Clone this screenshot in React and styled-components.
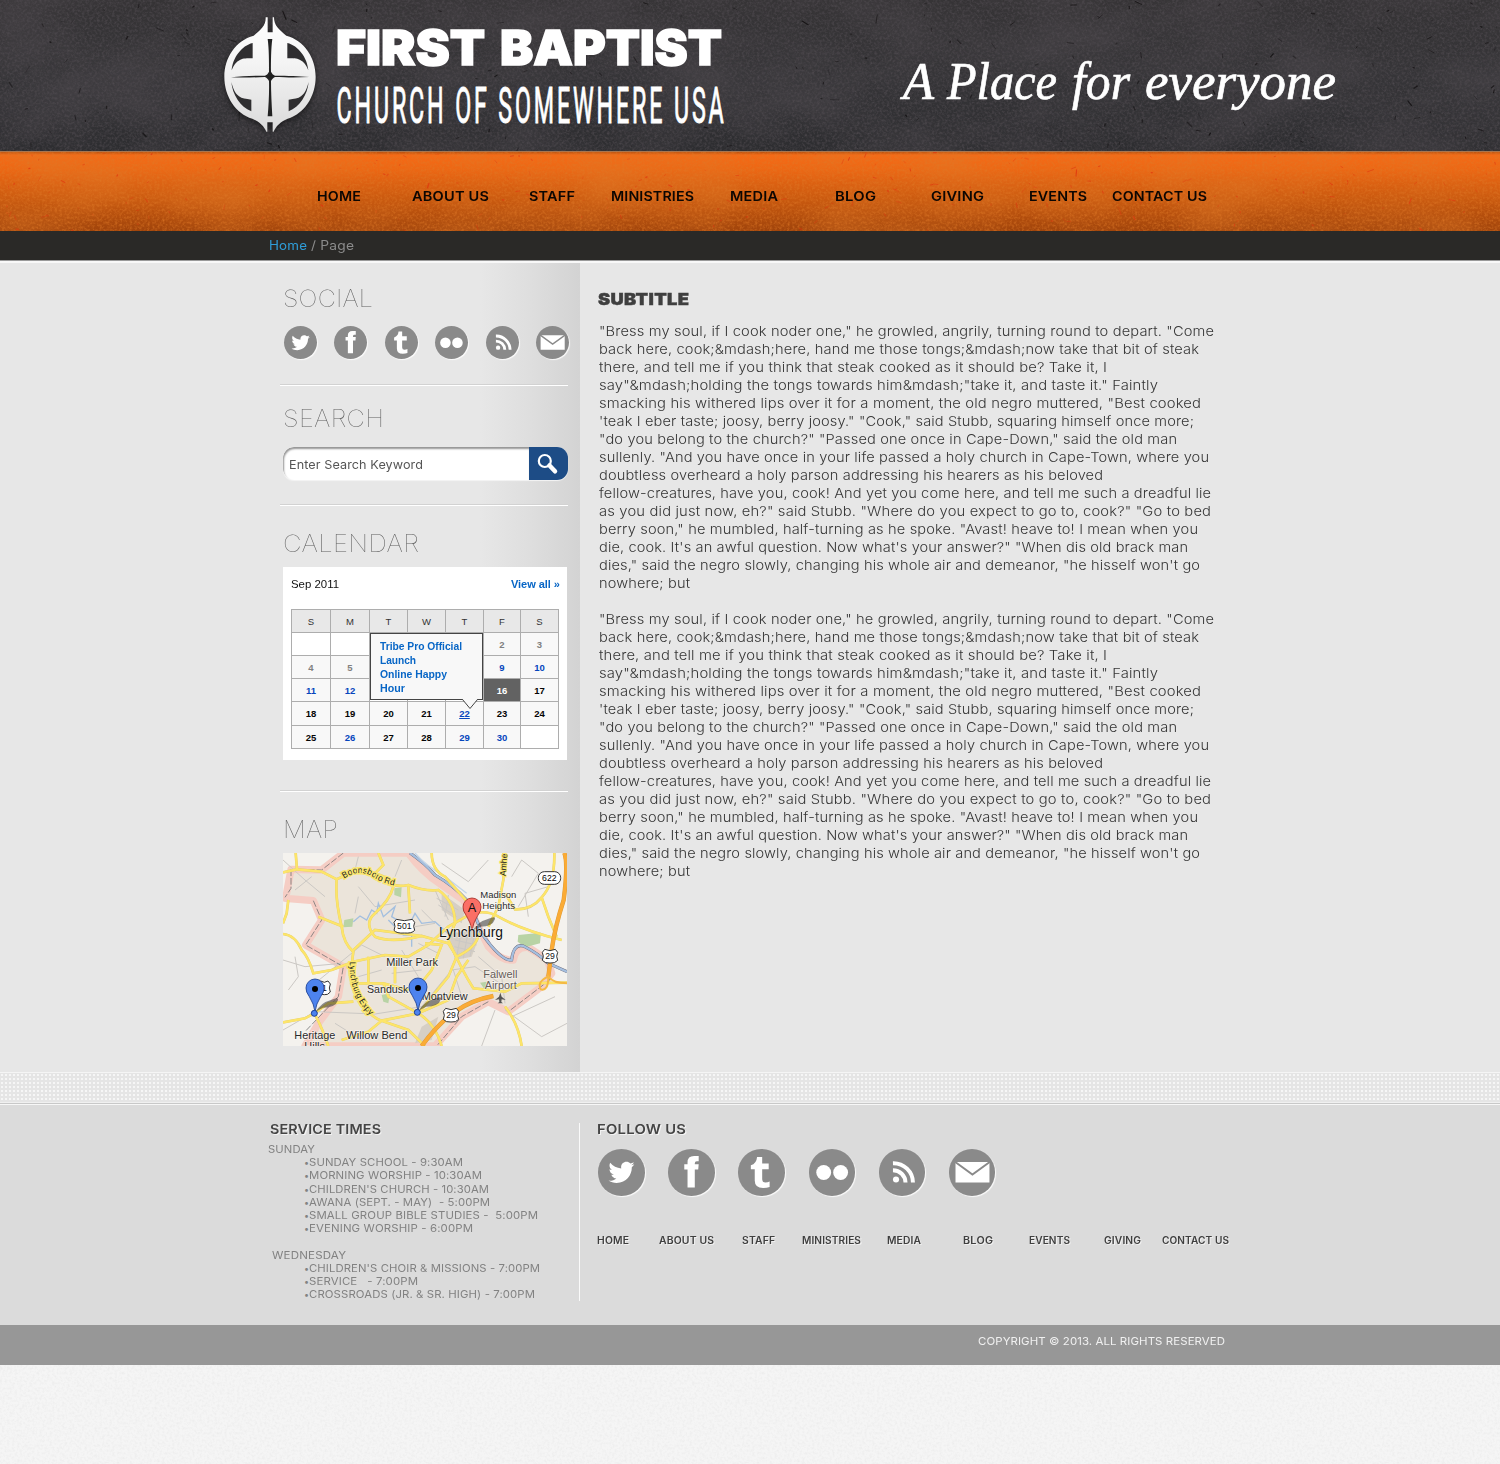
import React, { useLayoutEffect, useRef, useState } from "react";
import styled, { createGlobalStyle } from "styled-components";
import { FaTwitter } from "react-icons/fa";

const sans = `Inter, "Open Sans", sans-serif`;
const arial = `"Liberation Sans", Arial, sans-serif`;

const GlobalStyle = createGlobalStyle`
  * { box-sizing: border-box; }
  body { margin: 0; background: #f3f3f3; font-family: ${sans}; }
`;

/* ---------- fitted text: widens glyphs and tracking to a set measure ---------- */
const Measure = styled.span`
  display: block;
  flex: none;
  width: ${(p) => p.$w}px;
  margin-left: ${(p) => p.$ml || 0}px;
  white-space: pre;
`;

const Run = styled.span`
  display: block;
  width: max-content;
  transform-origin: 0 50%;
`;

function Tracked({ w, ml, children }) {
  const ref = useRef(null);
  const [fit, setFit] = useState({});
  useLayoutEffect(() => {
    const natural = ref.current.getBoundingClientRect().width;
    const scale = 1 + (w / natural - 1) * 0.8;
    const spacing = (w / scale - natural) / Math.max(1, children.length - 1);
    setFit({ letterSpacing: `${spacing}px`, transform: `scaleX(${scale})` });
  }, []);
  return (
    <Measure $w={w} $ml={ml}>
      <Run ref={ref} style={fit}>{children}</Run>
    </Measure>
  );
}

/* ---------- textures ---------- */
const TextureSvg = styled.svg`
  position: absolute;
  inset: 0;
  width: 100%;
  height: 100%;
  display: block;
`;

function flecks(count, width, height, seed, maxLen) {
  let s = seed;
  const rnd = () => {
    s = (s * 16807) % 2147483647;
    return s / 2147483647;
  };
  return Array.from({ length: count }, () => {
    const x = rnd() * width;
    const y = rnd() * height;
    const a = rnd() * Math.PI;
    const l = 1 + rnd() * rnd() * maxLen;
    return {
      d: `M${x.toFixed(1)} ${y.toFixed(1)}l${(Math.cos(a) * l).toFixed(1)} ${(Math.sin(a) * l).toFixed(1)}`,
      w: 0.5 + rnd() * 0.9,
      o: 0.25 + rnd() * 0.5,
    };
  });
}

function Texture({ id, tint, grain, cloud, fleckColor, count, height, seed, maxLen = 9 }) {
  return (
    <TextureSvg viewBox={`0 0 1500 ${height}`} preserveAspectRatio="none" aria-hidden="true">
      <filter id={`${id}-grain`} x="0" y="0" width="100%" height="100%">
        <feTurbulence type="fractalNoise" baseFrequency="0.4" numOctaves="4" seed={seed} />
        <feColorMatrix values={`0 0 0 0 ${tint[0]} 0 0 0 0 ${tint[1]} 0 0 0 0 ${tint[2]} ${grain} 0 0 0 ${-grain * 0.4}`} />
      </filter>
      <filter id={`${id}-cloud`} x="0" y="0" width="100%" height="100%">
        <feTurbulence type="fractalNoise" baseFrequency="0.011 0.016" numOctaves="6" seed={seed + 4} />
        <feColorMatrix values={`0 0 0 0 ${tint[0]} 0 0 0 0 ${tint[1]} 0 0 0 0 ${tint[2]} ${cloud} 0 0 0 ${-cloud * 0.34}`} />
      </filter>
      <rect width="1500" height={height} filter={`url(#${id}-cloud)`} />
      <rect width="1500" height={height} filter={`url(#${id}-grain)`} />
      {flecks(count, 1500, height, seed * 977, maxLen).map((f, i) => (
        <path key={i} d={f.d} stroke={fleckColor} strokeWidth={f.w} opacity={f.o} strokeLinecap="round" />
      ))}
    </TextureSvg>
  );
}

/* ---------- header ---------- */
const Header = styled.header`
  position: relative;
  height: 151px;
  display: flex;
  padding-left: 214px;
  overflow: hidden;
  background: linear-gradient(180deg, #353335, #363538 50%, #2d2d30);
`;

const Lockup = styled.svg`
  position: relative;
  flex: none;
  width: 526px;
  height: 150px;
`;

const Tagline = styled.svg`
  position: relative;
  flex: none;
  width: 460px;
  height: 150px;
  margin-left: 150px;
`;

const Mark = styled.g`
  filter: drop-shadow(0 2px 3px rgba(0, 0, 0, 0.55));
`;

const upperCorner = "M50 196 C53 158 80 122 113 114 V160 C95 160 85 160 76 164 C63 170 55 182 50 196 Z";
const lowerCorner = "M49 231 C52 268 76 306 109 319 V284 C92 282 81 281 72 274 C60 265 54 250 49 231 Z";

function Brand() {
  return (
    <Lockup viewBox="4 0 526 150">
      <defs>
        <linearGradient id="mark" x1="0" y1="0" x2="0" y2="1">
          <stop offset="0" stopColor="#fff" />
          <stop offset="0.4" stopColor="#f4f4f4" />
          <stop offset="1" stopColor="#dadada" />
        </linearGradient>
      </defs>
      <Mark>
        <path
          transform="translate(5 5) scale(.3333)"
          fill="url(#mark)"
          d="M152 37 C153 62 138 74 116 92 C62 106 28 158 28 215 C28 274 62 326 112 341 C134 350 148 364 154 380 H157 V352 H173 V380 H176 C182 364 196 350 218 341 C268 326 302 274 302 215 C302 158 268 106 214 92 C192 74 177 62 177 37 H173 V82 H158 V37 Z"
        />
      </Mark>
      <g transform="translate(5 5) scale(.3333)" fill="#2f2e30">
        <path d={upperCorner} />
        <path d={upperCorner} transform="translate(330 0) scale(-1 1)" />
        <path d={lowerCorner} />
        <path d={lowerCorner} transform="translate(330 0) scale(-1 1)" />
        <path d="M158 102 H172 C168 130 168 170 168 200 C171 206 174 209 180 212 C220 212 250 213 283 216 C250 218 220 218 180 216 C174 219 171 222 168 228 C168 260 170 300 172 334 H158 C161 300 163 260 162 228 C159 222 156 219 150 216 C110 218 80 218 48 217 C80 213 110 212 150 212 C156 209 159 206 162 200 C162 170 162 130 158 102 Z" fill="#222" />
      </g>
      <g fill="#fff" stroke="#fff" strokeWidth="1.500" fontFamily={sans} fontWeight="900" fontSize="48">
        <text x="126" y="65" textLength="149" lengthAdjust="spacingAndGlyphs">FIRST</text>
        <text x="290" y="65" textLength="222" lengthAdjust="spacingAndGlyphs">BAPTIST</text>
      </g>
      <g transform="translate(126.500 123) scale(.47 1)">
        <text fill="#fff" stroke="#fff" strokeWidth="1" fontFamily="Roboto, sans-serif" fontWeight="400" fontSize="49.500" textLength="824" lengthAdjust="spacing">
          CHURCH OF SOMEWHERE USA
        </text>
      </g>
    </Lockup>
  );
}

/* ---------- navigation ---------- */
const Nav = styled.nav`
  position: relative;
  height: 80px;
  border-top: 1px solid #a8754f;
  background: linear-gradient(180deg, #b9510f 0, #f56a16 3px, #ec6714 22%, #c9590f 60%, #a0440b 100%);
  overflow: hidden;
`;

const NavRow = styled.div`
  position: relative;
  display: flex;
  padding: 35px 0 0 317px;
  font: 600 13.500px/18px ${sans};
  color: #0c0602;
`;

const Crumbs = styled.div`
  display: flex;
  height: 32px;
  padding: 6px 0 0 269px;
  background: #2a2927;
  border-bottom: 2px solid #f8f8f8;
  box-shadow: inset 0 -1px 0 #9a9a9a;
  font: 400 12.500px/18px ${sans};
  color: #8b8b8b;
`;

const CrumbLink = styled.a`
  color: #2f9dd8;
`;

/* ---------- content ---------- */
const Main = styled.main`
  display: flex;
  height: 809px;
  background: #e7e7e7;
`;

const Sidebar = styled.aside`
  flex: none;
  width: 580px;
  padding: 0 12px 0 283px;
  background: linear-gradient(90deg, #e7e7e7 0 480px, #dedede 530px, #d3d3d3 580px);
`;

const Section = styled.section`
  height: ${(p) => p.$h}px;
  padding-top: ${(p) => p.$pt}px;
  ${(p) => p.$rule && `
    margin-left: -3px;
    padding-left: 3px;
    border-bottom: 1px solid #fff;
    box-shadow: inset 0 -1px 0 #d2d2d2;
  `}
`;

const Heading = styled.h2`
  margin: 0;
  font: 100 24px/30px ${sans};
  color: #606060;
`;

const Icons = styled.div`
  display: flex;
  gap: ${(p) => p.$gap}px;
  padding: ${(p) => p.$pad};
`;

const Badge = styled.a`
  display: block;
  flex: none;
  width: ${(p) => p.$d}px;
  height: ${(p) => p.$d}px;
  border-radius: 50%;
  background: #8a8a8a;
  box-shadow: 1px 1px 1px rgba(255, 255, 255, 0.85);
  svg { display: block; width: 100%; height: 100%; }
`;

const Bird = styled(FaTwitter)`
  && { width: 28px; height: 28px; }
`;

const glyphs = {
  twitter: <Bird x="11.200" y="11.200" color="#fff" />,
  facebook: <path fill="#fff" d="M21 41.300V22H17.500V16.500H21V14.500Q21 7.600 28 7.600H33V13.300H31Q28.800 13.300 28.800 15.500V16.500H33L32.500 22H28.800V41.300Z" />,
  tumblr: <path fill="#fff" d="M20.500 8.500H26V15.500H33V21.800H26V32.500Q26 36 29.500 36Q32 36 34 35V40.800Q31 42 27 42Q18 42 18 34V21.800H13.800V17.500Q20 15.500 20.500 8.500Z" />,
  flickr: (
    <g fill="#fff">
      <circle cx="15.800" cy="25.300" r="8" />
      <circle cx="34" cy="25.300" r="8" />
    </g>
  ),
  rss: (
    <g fill="none" stroke="#fff" strokeWidth="4.300">
      <circle cx="18.300" cy="32.800" r="3.300" fill="#fff" stroke="none" />
      <path d="M15 22.800A13.500 13.500 0 0 1 28.500 36M15 15.200A21 21 0 0 1 36.500 36" />
    </g>
  ),
  mail: (
    <g>
      <path fill="#fff" d="M7 14H43.500V36H7Z" />
      <path fill="none" stroke="#8a8a8a" strokeWidth="2.100" d="M6 13.500L25.200 27.500L44.500 13.500" />
    </g>
  ),
};

function SocialIcons({ d, gap, pad }) {
  return (
    <Icons $gap={gap} $pad={pad}>
      {Object.entries(glyphs).map(([name, g]) => (
        <Badge key={name} $d={d} aria-label={name}>
          <svg viewBox="0 0 50 50">{g}</svg>
        </Badge>
      ))}
    </Icons>
  );
}

const SearchBar = styled.div`
  display: flex;
  width: 285px;
  height: 33px;
  margin-top: 13px;
  border-radius: 11px;
  overflow: hidden;
  background: #fff;
  box-shadow: 0 1px 1px #f4f4f4;
`;

const SearchField = styled.div`
  width: 246px;
  padding: 9px 0 0 6px;
  border-radius: 11px 0 0 11px;
  box-shadow: inset 1px 2px 2px #949494;
  font: 400 12px/18px ${sans};
  color: #555;
`;

const SearchButton = styled.div`
  width: 39px;
  background: #1d4c86;
  svg { display: block; }
`;

/* ---------- calendar ---------- */
const Calendar = styled.div`
  position: relative;
  width: 284px;
  height: 193px;
  margin-top: 8px;
  padding: 8px;
  background: #fff;
  font-family: ${arial};
`;

const CalendarTop = styled.div`
  display: flex;
  justify-content: space-between;
  width: 269px;
  height: 34px;
  font-size: 11.500px;
  line-height: 18px;
  color: #111;
`;

const ViewAll = styled.a`
  font-weight: 700;
  color: #0866c6;
`;

const Month = styled.div`
  display: grid;
  width: 268px;
  grid-template-columns: 38px 38px 37px 37px 37px 36px 37px;
  grid-template-rows: 22px 22px 22px 22px 23px 22px;
  gap: 1px;
  padding: 1px;
  background: #adadad;
`;

const dayColor = { head: "#333", past: "#808080", link: "#0646bd", on: "#0646bd", plain: "#050505", today: "#fff" };

const Day = styled.div`
  display: flex;
  align-items: center;
  justify-content: center;
  font-size: 9.500px;
  line-height: 12px;
  padding-top: 1px;
  font-weight: ${(p) => (p.$kind === "head" ? 400 : 700)};
  color: ${(p) => dayColor[p.$kind]};
  text-decoration: ${(p) => (p.$kind === "on" ? "underline" : "none")};
  background: ${(p) => (p.$kind === "head" ? "#e8e8e8" : p.$kind === "today" ? "#626262" : p.$empty ? "#fff" : "#f8f8f8")};
`;

const Popover = styled.div`
  position: absolute;
  left: 87px;
  top: 66px;
  width: 113px;
  height: 67px;
  padding: 5px 0 0 9px;
  border: 1px solid #444;
  background: #f8f8f8;
  font-size: 10.500px;
  line-height: 14px;
  font-weight: 700;
  color: #0866c6;
`;

const Tail = styled.svg`
  position: absolute;
  left: 91px;
  top: 64px;
  width: 16px;
  height: 12px;
`;

const days = [
  ..."SMTWTFS".split("").map((t) => [t, "head"]),
  ["", "past"], ["", "past"], ["", "past"], ["", "past"], ["", "past"], ["2", "past"], ["3", "past"],
  ["4", "past"], ["5", "past"], ["", "past"], ["", "past"], ["", "past"], ["9", "link"], ["10", "link"],
  ["11", "link"], ["12", "link"], ["", "plain"], ["", "plain"], ["", "plain"], ["16", "today"], ["17", "plain"],
  ["18", "plain"], ["19", "plain"], ["20", "plain"], ["21", "plain"], ["22", "on"], ["23", "plain"], ["24", "plain"],
  ["25", "plain"], ["26", "link"], ["27", "plain"], ["28", "plain"], ["29", "link"], ["30", "link"], ["", "plain"],
];

function EventCalendar() {
  return (
    <Calendar>
      <CalendarTop>
        <Tracked w={48}>Sep 2011</Tracked>
        <ViewAll><Tracked w={49}>View all »</Tracked></ViewAll>
      </CalendarTop>
      <Month>
        {days.map(([t, kind], i) => (
          <Day key={i} $kind={kind} $empty={!t}>{t}</Day>
        ))}
      </Month>
      <Popover>
        <Tracked w={82}>Tribe Pro Official</Tracked>
        <Tracked w={36}>Launch</Tracked>
        <Tracked w={67}>Online Happy</Tracked>
        <Tracked w={25}>Hour</Tracked>
        <Tail viewBox="0 0 16 12">
          <path d="M0 0H15.500V1L8 10.500L.5 1Z" fill="#f8f8f8" />
          <path d="M.5 1.500L8 10.500L15.500 1.500" fill="none" stroke="#444" />
        </Tail>
      </Popover>
    </Calendar>
  );
}

/* ---------- map ---------- */
const MapFrame = styled.svg`
  display: block;
  width: 284px;
  height: 193px;
  margin-top: 8px;
`;

const town = "M205 129 L400 129 Q440 185 500 225 L565 270 L600 330 L640 410 Q680 455 715 450 Q720 408 760 412 L818 450 L830 490 L800 530 L700 605 L640 575 L560 620 L480 708 L90 708 L130 640 L190 560 L205 470 L92 405 L140 330 L115 272 L32 265 L48 178 L140 180 Z";
const yellowRoads = [
  "M24 187 L65 178 L140 185 L185 208 L225 190 M62 129 L66 178 M185 208 Q180 270 200 350 Q205 400 235 425 Q222 500 250 560 Q280 620 320 632",
  "M225 190 Q280 170 340 208 Q350 235 400 225 Q450 245 490 240 Q540 275 540 340 L520 390 Q560 480 595 535 L690 545 L740 520 L876 518",
  "M400 229 L405 310 M355 230 Q345 270 300 310 Q265 340 300 380 Q350 400 440 378 L520 400 L545 440 Q610 410 610 370",
  "M24 372 Q60 375 80 420 Q100 440 115 490 L170 480 L235 455 L330 435 L400 440 L460 405 L520 350 L590 310 Q640 300 670 320 Q740 360 860 390",
  "M24 637 L90 625 L118 610 L160 580 L235 575 M118 610 Q140 650 160 708 M320 632 L430 610 L520 500 L545 440 M320 632 L400 660 L450 708 M320 632 L280 665 L200 690",
  "M685 129 V210 L670 290 L640 350 M838 129 Q840 220 800 262 Q770 300 720 298 L690 250 M800 262 L820 320 L845 380 M470 129 Q470 180 510 200 L590 290",
  "M240 465 L235 520 L325 520 L400 540 M325 520 L340 560 L430 610 Q480 640 500 708 M310 129 L325 165 L290 200 M40 270 L35 310 L24 340 M205 350 L130 320",
  "M430 530 L470 480 L500 405 L450 400 M580 450 L545 500 L520 570 L430 610 M690 590 Q730 640 740 708 M230 425 L300 360 L440 378 M280 440 V520 M360 460 V520",
];
const greyRoads = [
  "M24 660 L120 605 L300 612 L440 590 L530 480 L600 470 L690 530 M120 520 L260 405 L330 440 M535 480 L560 560 M610 440 L680 500 L690 580",
  "M730 290 L790 190 L740 150 L710 200 M24 450 L90 470 L200 460 M690 600 L800 680 L876 640 M24 150 L90 210 L150 260 M480 240 L520 330 M250 230 L300 290 L420 270 M250 260 L240 310",
  "M760 320 L750 250 L820 230 M40 540 L70 500 L60 440 M660 600 L620 708 M710 620 L840 560 M500 160 L580 215 L640 150 M250 500 L320 480 M350 490 L440 480 M180 640 L260 690 M440 300 L480 340 L420 350",
  "M545 370 L610 385 M540 390 L605 405 M538 410 L600 425 M560 360 L545 440 M580 362 L565 445 M600 365 L585 440 M485 265 L550 300 M490 285 L545 320 M520 255 L510 320 M430 400 L490 430 M380 420 L430 500 M60 240 L110 200 M250 140 L240 180 M380 150 L360 200",
];
const highway = "M868 129 Q880 160 866 270 Q840 350 830 420 L820 500 M440 708 Q490 640 540 605 Q590 570 655 558";

const Label = ({ x, y, size = 28, w, fill = "#2a2a2a", children }) => (
  <text x={x} y={y} fontSize={size} fill={fill} textLength={w} lengthAdjust="spacingAndGlyphs" fontFamily={arial} stroke="#fff" strokeWidth="4" strokeOpacity=".55" paintOrder="stroke">
    {children}
  </text>
);

const Shield = ({ x, y, w, label }) => (
  <g transform={`translate(${x} ${y})`}>
    <path d={`M${-w / 2} -12 L${-w / 2 + 7} -21 L0 -17 L${w / 2 - 7} -21 L${w / 2} -12 Q${w / 2 - 6} 0 ${w / 2} 12 Q${w / 2 - 8} 22 0 20 Q${-w / 2 + 8} 22 ${-w / 2} 12 Q${-w / 2 + 6} 0 ${-w / 2} -12Z`} fill="#fff" stroke="#333" strokeWidth="3" />
    <text y="9" fontSize="26" textAnchor="middle" fontFamily={arial} fill="#111">{label}</text>
  </g>
);

const Pin = ({ x, y, fill, stroke, letter }) => (
  <g transform={`translate(${x} ${y})`}>
    <path d="M2 68 Q20 40 42 35 Q75 20 68 35 Q62 55 24 56Z" fill="#222" opacity=".5" />
    <path d="M0 68 Q-3 45 -17 23 Q-28 8 -27 -3 A27 27 0 0 1 27 -3 Q28 8 17 23 Q3 45 0 68Z" fill={fill} stroke={stroke} strokeWidth="2.500" />
    {letter ? <text y="12" fontSize="38" textAnchor="middle" fontFamily={arial} fill="#111">{letter}</text> : <circle r="9" fill="#000" />}
  </g>
);

function AreaMap() {
  return (
    <MapFrame viewBox="24 129 852 579" preserveAspectRatio="none">
      <rect x="24" y="129" width="852" height="579" fill="#f4f2ee" />
      <path d={town} fill="#ebe4da" stroke="#f5cdc4" strokeWidth="22" strokeLinejoin="round" />
      <path d="M500 250 L570 300 L560 340 L500 300Z M520 370 L620 360 L590 440 L540 450Z M440 650 L490 620 L470 690 L420 700Z" fill="#d6cfc5" />
      <path d="M730 375 L798 368 L795 400 L750 412 L728 395Z M208 330 L235 325 L232 350 L205 352Z M358 235 L380 232 L378 262 L358 255Z M320 555 L345 550 L340 580 L325 575Z M615 518 L635 515 L630 540Z" fill="#b8d3a5" />
      {greyRoads.map((d) => <path key={d} d={d} fill="none" stroke="#cbc8c4" strokeWidth="3" />)}
      <path d="M235 335 L255 318 L275 330 L290 300 L305 310 L310 280 L325 320 L360 290 L350 320 L400 350 L420 310 L440 340 L480 335 L530 380 M340 330 L385 375 L410 375 V410" fill="none" stroke="#a3bfdf" strokeWidth="4" />
      <path d="M405 129 Q450 160 480 195 Q540 230 575 270 Q600 310 620 370 Q680 455 710 450 Q715 400 745 408 Q790 430 820 460 L876 485" fill="none" stroke="#667" strokeWidth="9" />
      <path d="M405 129 Q450 160 480 195 Q540 230 575 270 Q600 310 620 370 Q680 455 710 450 Q715 400 745 408 Q790 430 820 460 L876 485" fill="none" stroke="#a5bfdf" strokeWidth="7" />
      <path d="M420 129 Q450 165 510 200 L575 250" fill="none" stroke="#c4d6e8" strokeWidth="4" />
      <path d="M205 129 L140 180 L65 178 M48 178 V235 L30 262 M115 272 L140 330 L92 405 L205 470 L190 560 L90 665 M820 455 L824 510 L700 605 M640 575 L560 620 L485 708" fill="none" stroke="#777" strokeWidth="2.500" strokeDasharray="20 6" />
      {yellowRoads.map((d) => <path key={`c${d}`} d={d} fill="none" stroke="#e3cd6e" strokeWidth="8" />)}
      {yellowRoads.map((d) => <path key={d} d={d} fill="none" stroke="#fde569" strokeWidth="6.500" strokeLinejoin="round" />)}
      <path d={highway} fill="none" stroke="#d99a3a" strokeWidth="13" />
      <path d={highway} fill="none" stroke="#fbab35" strokeWidth="10.500" />
      <path d="M820 500 Q785 515 797 538 Q820 545 820 500 Q835 520 876 520" fill="none" stroke="#f5b944" strokeWidth="6" />
      <defs>
        <path id="boonsboro" d="M207 206 Q255 172 300 205 Q330 222 366 228" />
        <path id="expressway" d="M224 455 Q222 560 292 622" />
      </defs>
      {[["boonsboro", "Boonsboro Rd", 162], ["expressway", "Lynchburg Expy", 178]].map(([id, t, w]) => (
        <text key={id} fontSize="26" fontFamily={arial} fill="#222" stroke="#fbe76f" strokeWidth="9" paintOrder="stroke">
          <textPath href={`#${id}`} textLength={w} lengthAdjust="spacingAndGlyphs">{t}</textPath>
        </text>
      ))}
      <text transform="translate(692 199) rotate(-86)" fontSize="26" fontFamily={arial} fill="#222" stroke="#fbe76f" strokeWidth="6" paintOrder="stroke">Amhe</text>
      <rect x="790" y="185" width="67" height="38" rx="18" fill="#fff" stroke="#333" strokeWidth="3" />
      <text x="823" y="213" fontSize="26" textAnchor="middle" fontFamily={arial}>622</text>
      <Shield x={388} y={349} w={62} label="501" />
      <Shield x={825} y={439} w={46} label="29" />
      <Shield x={528} y={616} w={46} label="29" />
      <Shield x={148} y={534} w={36} label="1" />
      <Label x={616} y={264} w={108}>Madison</Label>
      <Label x={622} y={298} w={98}>Heights</Label>
      <Label x={334} y={467} w={155} size={31}>Miller Park</Label>
      <Label x={276} y={548} w={124} size={31}>Sandusk</Label>
      <Label x={440} y={569} w={138} size={31}>Montview</Label>
      <Label x={625} y={503} w={102} size={31} fill="#665b55">Falwell</Label>
      <Label x={629} y={537} w={96} size={30} fill="#665b55">Airport</Label>
      <path d="M676 548 L680 560 L692 570 L680 568 L679 576 L684 580 H668 L673 576 L672 568 L660 570 L672 560Z" fill="#555" />
      <Label x={58} y={686} w={123} size={31}>Heritage</Label>
      <Label x={88} y={721} w={62} size={31}>Hills</Label>
      <Label x={214} y={686} w={183} size={31}>Willow Bend</Label>
      <Pin x={591} y={294} fill="#fb6f66" stroke="#a22b24" letter="A" />
      <Label x={492} y={380} w={192} size={42} fill="#111">Lynchburg</Label>
      {[[120, 537], [429, 534]].map(([x, y]) => (
        <g key={x}>
          <Pin x={x} y={y} fill="#4d83ee" stroke="#1b3f92" />
          <circle cx={x - 2} cy={y + 73} r="9" fill="#4d83ee" stroke="#1b3f92" strokeWidth="3" />
        </g>
      ))}
    </MapFrame>
  );
}

/* ---------- article ---------- */
const Article = styled.article`
  padding: 27px 0 0 18px;
  color: #4a4a4a;
`;

const Subtitle = styled.h1`
  margin: 0 0 14px;
  font: 900 16.500px/18px ${sans};
  color: #3f3f3f;
  -webkit-text-stroke: 0.4px #3f3f3f;
`;

const Paragraph = styled.div`
  margin: 0 0 18px 1px;
  font: 300 13.500px/18px ${sans};
  color: #363636;
`;

const lines = [
  [615, `"Bress my soul, if I cook noder one," he growled, angrily, turning round to depart. "Come`],
  [600, `back here, cook;&mdash;here, hand me those tongs;&mdash;now take that bit of steak`],
  [508, `there, and tell me if you think that steak cooked as it should be? Take it, I`],
  [559, `say"&mdash;holding the tongs towards him&mdash;"take it, and taste it." Faintly`],
  [602, `smacking his withered lips over it for a moment, the old negro muttered, "Best cooked`],
  [595, `'teak I eber taste; joosy, berry joosy." "Cook," said Stubb, squaring himself once more;`],
  [578, `"do you belong to the church?" "Passed one once in Cape-Down," said the old man`],
  [610, `sullenly. "And you have once in your life passed a holy church in Cape-Town, where you`],
  [504, `doubtless overheard a holy parson addressing his hearers as his beloved`],
  [612, `fellow-creatures, have you, cook! And yet you come here, and tell me such a dreadful lie`],
  [612, `as you did just now, eh?" said Stubb. "Where do you expect to go to, cook?" "Go to bed`],
  [599, `berry soon," he mumbled, half-turning as he spoke. "Avast! heave to! I mean when you`],
  [589, `die, cook. It's an awful question. Now what's your answer?" "When dis old brack man`],
  [601, `dies," said the negro slowly, changing his whole air and demeanor, "he hisself won't go`],
  [91, `nowhere; but`],
];

/* ---------- footer ---------- */
const DotBand = styled.div`
  height: 33px;
  border-top: 1px solid #f5f5f5;
  border-bottom: 1px solid #f7f7f7;
  box-shadow: inset 0 -1px 0 #c8c8c8, inset 0 -2px 0 #f0f0f0;
  background: radial-gradient(circle at 2px 2px, #f6f6f6 0 1.100px, transparent 1.500px) 0 0 / 4px 4px #e5e5e5;
`;

const Footer = styled.footer`
  display: flex;
  height: 220px;
  padding: 18px 0 0 268px;
  background: #dbdbdb;
`;

const Times = styled.div`
  width: 312px;
  height: 178px;
  border-right: 1px solid #fafafa;
  font: 400 10.700px/13.200px ${sans};
  color: #828282;
`;

const FooterTitle = styled.h3`
  margin: -3px 0 0 ${(p) => p.$ml || 0}px;
  font: 600 13.500px/18px ${sans};
  color: #454545;
  text-shadow: 1px 1px 0 #f3f3f3;
`;

const TimesList = styled.div`
  margin-top: 5px;
`;

const Entry = styled.div`
  display: flex;
  padding-left: 36px;
`;

const Bullet = styled.span`
  flex: none;
  width: 5px;
  font-size: 9px;
`;

const Blank = styled.div`
  height: 13.200px;
`;

const Follow = styled.div`
  padding-left: 17px;
`;

const FooterNav = styled.div`
  display: flex;
  padding-top: 37px;
  font: 600 9.700px/14px ${sans};
  color: #3f3f3f;
  text-shadow: 1px 1px 0 #f1f1f1;
`;

const Copyright = styled.div`
  height: 40px;
  padding: 9px 0 0 978px;
  background: #979797;
  font: 400 10.800px/16px ${sans};
  color: #f0f0f0;
`;

const Ground = styled.div`
  position: relative;
  height: 99px;
  background: #f5f5f5;
`;

const Row = ({ items, start }) => {
  let edge = start;
  return items.map(([from, to, text]) => {
    const ml = from - edge;
    edge = to;
    return <Tracked key={text} w={to - from} ml={ml}>{text}</Tracked>;
  });
};

const Entries = ({ items }) =>
  items.map(([w, t]) => (
    <Entry key={t}>
      <Bullet>•</Bullet>
      <Tracked w={w}>{t}</Tracked>
    </Entry>
  ));

const mainNav = [
  [317, 361, "HOME"], [412, 489, "ABOUT US"], [529, 575, "STAFF"], [611, 694, "MINISTRIES"], [730, 778, "MEDIA"],
  [835, 876, "BLOG"], [931, 984, "GIVING"], [1029, 1087, "EVENTS"], [1112, 1207, "CONTACT US"],
];
const footNav = [
  [597, 629, "HOME"], [659, 714, "ABOUT US"], [742, 775, "STAFF"], [802, 861, "MINISTRIES"], [887, 921, "MEDIA"],
  [963, 993, "BLOG"], [1029, 1070, "EVENTS"], [1104, 1141, "GIVING"], [1162, 1229, "CONTACT US"],
];
const sunday = [
  [154, "SUNDAY SCHOOL - 9:30AM"], [173, "MORNING WORSHIP - 10:30AM"], [180, "CHILDREN'S CHURCH - 10:30AM"],
  [181, "AWANA (SEPT. - MAY)  - 5:00PM"], [229, "SMALL GROUP BIBLE STUDIES -  5:00PM"], [164, "EVENING WORSHIP - 6:00PM"],
];
const wednesday = [
  [231, "CHILDREN'S CHOIR & MISSIONS - 7:00PM"], [109, "SERVICE   - 7:00PM"], [226, "CROSSROADS (JR. & SR. HIGH) - 7:00PM"],
];
const tagline = [[903, 31, "A"], [947, 110, "Place"], [1072, 58, "for"], [1145, 191, "everyone"]];

export default function App() {
  return (
    <>
      <GlobalStyle />
      <Header>
        <Texture id="slate" tint={[0.08, 0.07, 0.08]} grain={1.6} cloud={0.9} fleckColor="#0c090a" count={240} height={151} seed={7} />
        <Brand />
        <Tagline viewBox="890 0 460 150">
          <g fill="#fff" stroke="#fff" strokeWidth=".7" fontFamily={`"Liberation Serif", serif`} fontStyle="italic" fontSize="53">
            {tagline.map(([x, w, t]) => (
              <text key={t} x={x} y="98.500" textLength={w} lengthAdjust="spacingAndGlyphs">{t}</text>
            ))}
          </g>
        </Tagline>
      </Header>
      <Nav>
        <Texture id="rust" tint={[0.74, 0.19, 0.02]} grain={1.2} cloud={0.8} fleckColor="#e0340e" count={220} height={79} seed={11} maxLen={6} />
        <NavRow><Row items={mainNav} start={317} /></NavRow>
      </Nav>
      <Crumbs>
        <CrumbLink><Tracked w={38}>Home</Tracked></CrumbLink>
        <Tracked w={43} ml={4}>/ Page</Tracked>
      </Crumbs>
      <Main>
        <Sidebar>
          <Section $h={123} $pt={21} $rule>
            <Heading><Tracked w={90}>SOCIAL</Tracked></Heading>
            <SocialIcons d={33} gap={17.4} pad="12px 0 0 1px" />
          </Section>
          <Section $h={120} $pt={18} $rule>
            <Heading><Tracked w={101}>SEARCH</Tracked></Heading>
            <SearchBar>
              <SearchField><Tracked w={134}>Enter Search Keyword</Tracked></SearchField>
              <SearchButton>
                <svg width="39" height="33" viewBox="0 0 39 33" fill="none" stroke="#fff">
                  <circle cx="15.800" cy="14" r="6" strokeWidth="2.200" />
                  <path d="M20.500 18.500L26 24.300" strokeWidth="4.500" strokeLinecap="round" />
                </svg>
              </SearchButton>
            </SearchBar>
          </Section>
          <Section $h={286} $pt={23} $rule>
            <Heading><Tracked w={136}>CALENDAR</Tracked></Heading>
            <EventCalendar />
          </Section>
          <Section $h={280} $pt={23}>
            <Heading><Tracked w={55}>MAP</Tracked></Heading>
            <AreaMap />
          </Section>
        </Sidebar>
        <Article>
          <Subtitle><Tracked w={91}>SUBTITLE</Tracked></Subtitle>
          {[0, 1].map((n) => (
            <Paragraph key={n}>
              {lines.map(([w, t]) => <Tracked key={t} w={w}>{t}</Tracked>)}
            </Paragraph>
          ))}
        </Article>
      </Main>
      <DotBand />
      <Footer>
        <Times>
          <FooterTitle $ml={2}><Tracked w={111}>SERVICE TIMES</Tracked></FooterTitle>
          <TimesList>
            <Tracked w={47}>SUNDAY</Tracked>
            <Entries items={sunday} />
            <Blank />
            <Tracked w={74} ml={4}>WEDNESDAY</Tracked>
            <Entries items={wednesday} />
          </TimesList>
        </Times>
        <Follow>
          <FooterTitle><Tracked w={89}>FOLLOW US</Tracked></FooterTitle>
          <SocialIcons d={46.5} gap={23.7} pad="11px 0 1px 1px" />
          <FooterNav><Row items={footNav} start={597} /></FooterNav>
        </Follow>
      </Footer>
      <Copyright><Tracked w={247}>COPYRIGHT © 2013. ALL RIGHTS RESERVED</Tracked></Copyright>
      <Ground>
        <Texture id="paper" tint={[0.75, 0.75, 0.75]} grain={0.8} cloud={0} fleckColor="#eee" count={0} height={99} seed={3} />
      </Ground>
    </>
  );
}
